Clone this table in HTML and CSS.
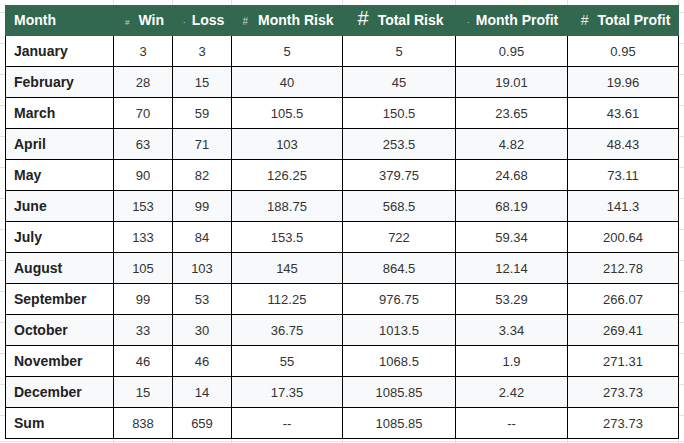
FILE: index.html
```html
<!DOCTYPE html>
<html>
<head>
<meta charset="utf-8">
<link rel="stylesheet" href="styles.css">
</head>
<body>
<table class="sheet">
  <thead>
    <tr>
      <th class="c-month">Month</th>
      <th class="c-win"><span class="ic ic-xs">#</span>Win</th>
      <th class="c-loss"><span class="ic ic-dot">·</span>Loss</th>
      <th class="c-mrisk"><span class="ic ic-s">#</span>Month Risk</th>
      <th class="c-trisk"><span class="ic ic-l">#</span>Total Risk</th>
      <th class="c-mprofit"><span class="ic ic-dot">·</span>Month Profit</th>
      <th class="c-tprofit"><span class="ic ic-m">#</span>Total Profit</th>
    </tr>
  </thead>
  <tbody>
    <tr><td>January</td><td>3</td><td>3</td><td>5</td><td>5</td><td>0.95</td><td>0.95</td></tr>
    <tr><td>February</td><td>28</td><td>15</td><td>40</td><td>45</td><td>19.01</td><td>19.96</td></tr>
    <tr><td>March</td><td>70</td><td>59</td><td>105.5</td><td>150.5</td><td>23.65</td><td>43.61</td></tr>
    <tr><td>April</td><td>63</td><td>71</td><td>103</td><td>253.5</td><td>4.82</td><td>48.43</td></tr>
    <tr><td>May</td><td>90</td><td>82</td><td>126.25</td><td>379.75</td><td>24.68</td><td>73.11</td></tr>
    <tr><td>June</td><td>153</td><td>99</td><td>188.75</td><td>568.5</td><td>68.19</td><td>141.3</td></tr>
    <tr><td>July</td><td>133</td><td>84</td><td>153.5</td><td>722</td><td>59.34</td><td>200.64</td></tr>
    <tr><td>August</td><td>105</td><td>103</td><td>145</td><td>864.5</td><td>12.14</td><td>212.78</td></tr>
    <tr><td>September</td><td>99</td><td>53</td><td>112.25</td><td>976.75</td><td>53.29</td><td>266.07</td></tr>
    <tr><td>October</td><td>33</td><td>30</td><td>36.75</td><td>1013.5</td><td>3.34</td><td>269.41</td></tr>
    <tr><td>November</td><td>46</td><td>46</td><td>55</td><td>1068.5</td><td>1.9</td><td>271.31</td></tr>
    <tr><td>December</td><td>15</td><td>14</td><td>17.35</td><td>1085.85</td><td>2.42</td><td>273.73</td></tr>
    <tr><td>Sum</td><td>838</td><td>659</td><td>--</td><td>1085.85</td><td>--</td><td>273.73</td></tr>
  </tbody>
</table>
</body>
</html>
```
FILE: styles.css
```css
html {
  background-color: #ffffff;
  background-image:
    linear-gradient(#e1e3e3, #e1e3e3),
    linear-gradient(#e1e3e3, #e1e3e3),
    linear-gradient(#e1e3e3, #e1e3e3),
    linear-gradient(#e1e3e3, #e1e3e3),
    linear-gradient(#e1e3e3, #e1e3e3),
    linear-gradient(#e1e3e3, #e1e3e3),
    linear-gradient(#e1e3e3, #e1e3e3),
    repeating-linear-gradient(to bottom, #e1e3e3 0 1px, transparent 1px 31px),
    repeating-linear-gradient(to bottom, #e1e3e3 0 1px, transparent 1px 31px),
    linear-gradient(#e1e3e3, #e1e3e3);
  background-repeat: no-repeat;
  background-size:
    1px 443px, 1px 443px, 1px 443px, 1px 443px, 1px 443px, 1px 443px, 1px 443px,
    5px 443px, 5px 443px, 684px 1px;
  background-position:
    113px 0, 172px 0, 231px 0, 342px 0, 455px 0, 567px 0, 678px 0,
    0 12px, 679px 12px, 0 441px;
  min-height: 443px;
}

body {
  margin: 0;
  padding: 5px 0 0 5px;
  font-family: "Liberation Sans", Arial, sans-serif;
}

.sheet {
  border-collapse: separate;
  border-spacing: 0;
  table-layout: fixed;
  width: 674px;
  background: #ffffff;
}

.sheet th {
  background: #31684f;
  color: #ffffff;
  font-size: 14px;
  font-weight: bold;
  height: 31px;
  padding: 0 0 2px 0;
  line-height: 16px;
  text-align: center;
  white-space: nowrap;
  box-sizing: border-box;
}

.sheet th.c-month {
  text-align: left;
  padding-left: 9px;
  width: 109px;
}
.sheet th.c-win { width: 59px; padding-left: 2px; }
.sheet th.c-loss { width: 59px; padding-left: 2px; }
.sheet th.c-mrisk { width: 111px; padding-left: 1px; }
.sheet th.c-trisk { width: 113px; padding-left: 2px; }
.sheet th.c-mprofit { width: 112px; padding-left: 1px; }
.sheet th.c-tprofit { width: 111px; padding-left: 4px; }

.ic {
  font-weight: normal;
  color: #c9d6cf;
  display: inline-block;
  vertical-align: baseline;
  line-height: 0;
}
.ic-xs { font-size: 8px; margin-right: 9px; }
.ic-s { font-size: 10px; margin-right: 10px; }
.ic-m { font-size: 14px; margin-right: 9px; color: #e6ece9; }
.ic-l { font-size: 20px; margin-right: 9px; color: #f2f5f3; }
.ic-dot { font-size: 9px; margin-right: 6px; }

.sheet td {
  height: 31px;
  box-sizing: border-box;
  padding: 0;
  text-align: center;
  font-size: 13px;
  color: #333333;
  border-right: 1px solid #000000;
  border-bottom: 1px solid #000000;
}

.sheet td:first-child {
  border-left: 1px solid #000000;
  text-align: left;
  padding-left: 8px;
  font-weight: bold;
  font-size: 14px;
  color: #222222;
}

.sheet tbody tr:nth-child(even) td {
  background: #f8f9fa;
}
```
